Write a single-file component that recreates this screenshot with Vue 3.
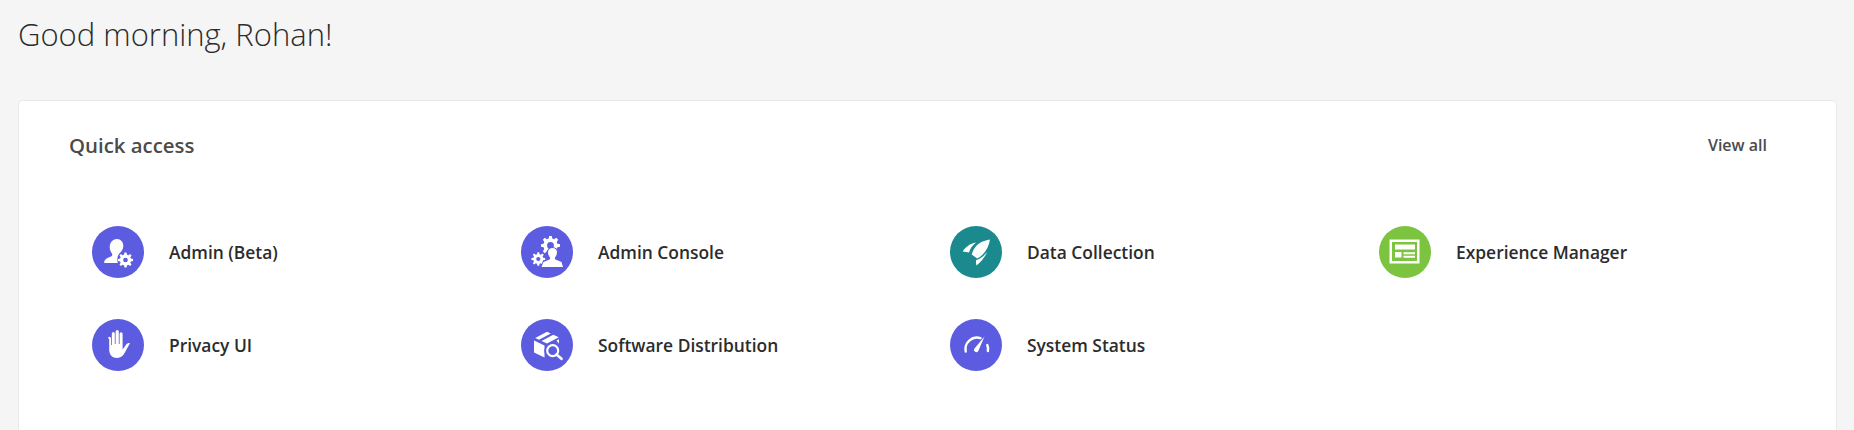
<script setup>
function gear(cx, cy, outer, inner, hole, teeth) {
  const step = (Math.PI * 2) / teeth
  let d = ''
  for (let i = 0; i < teeth; i++) {
    const a = i * step
    const pts = [
      [outer, a - step * 0.17],
      [outer, a + step * 0.17],
      [inner, a + step * 0.33],
      [inner, a + step * 0.67]
    ]
    pts.forEach(([r, t], n) => {
      d += `${n === 0 && i === 0 ? 'M' : 'L'}${(cx + r * Math.cos(t)).toFixed(2)} ${(cy + r * Math.sin(t)).toFixed(2)}`
    })
  }
  d += `Z M${cx - hole} ${cy}a${hole} ${hole} 0 1 0 ${hole * 2} 0a${hole} ${hole} 0 1 0 ${-hole * 2} 0Z`
  return d
}

const adminGear = gear(33.5, 34, 7.6, 5.6, 2.3, 8)
const consoleGearBig = gear(29.5, 19.5, 9.6, 7.2, 3.4, 8)
const consoleGearSmall = gear(17.3, 33, 6.9, 5, 2.1, 8)

const items = [
  { name: 'Admin (Beta)', color: 'purple', icon: 'admin' },
  { name: 'Admin Console', color: 'purple', icon: 'console' },
  { name: 'Data Collection', color: 'teal', icon: 'rocket' },
  { name: 'Experience Manager', color: 'green', icon: 'layout' },
  { name: 'Privacy UI', color: 'purple', icon: 'hand' },
  { name: 'Software Distribution', color: 'purple', icon: 'box' },
  { name: 'System Status', color: 'purple', icon: 'gauge' }
]
</script>

<template>
  <div class="page">
    <h1 class="greeting">Good morning, Rohan!</h1>
    <section class="card">
      <header class="card__head">
        <h2 class="card__title">Quick access</h2>
        <a class="card__link">View all</a>
      </header>
      <ul class="grid">
        <li v-for="item in items" :key="item.name" class="tile">
          <span class="badge" :class="`badge--${item.color}`">
            <svg viewBox="0 0 52 52" width="52" height="52" fill="#fff">
              <template v-if="item.icon === 'admin'">
                <path d="M25 13c3.800 0 6.300 3 6.300 6.800 0 2.500-1 4.600-2.300 6l-2 2.200c-1.400 1.600-2.200 5-1.200 9H12.800c-.5 0-.8-.4-.7-.9.4-2 1.600-3.400 3.400-4.200l3.400-1.400c1.300-.6 1.700-1.700 1.100-2.900-1.300-1.800-2.300-4-2.300-6.300C17.700 16 21.200 13 25 13z" />
                <path :d="adminGear" fill-rule="evenodd" />
              </template>
              <template v-else-if="item.icon === 'console'">
                <path :d="consoleGearBig" fill-rule="evenodd" />
                <path :d="consoleGearSmall" fill-rule="evenodd" />
                <circle cx="31.500" cy="29" r="7" fill="#5c5ce0" />
                <path d="M20.500 41 H42 l-1.500-5-6-2.500c-.8-.5-.8-1.500-.3-2.300 1-1.200 1.800-3 1.800-4.700 0-2.800-1.900-4.500-4.500-4.500s-4.500 1.700-4.500 4.500c0 1.700.8 3.500 1.800 4.700.5.800.5 1.800-.3 2.300l-6 2.500z" stroke="#5c5ce0" stroke-width="1.600" paint-order="stroke" />
              </template>
              <template v-else-if="item.icon === 'rocket'">
                <path d="M40 13.500C33 14.500 27.500 17.500 24 23c-1.200 2-1.800 3.800-2.300 5.500l5.500 4c1.800-.8 3.500-2 5-3.500C36.500 25 39 19.500 40 13.500z" />
                <path d="M26 16.500C20 17.500 15.500 21 12.700 25.500c2 .3 4.300.4 6.300 1 1-3.800 3.600-7.200 7-10z" />
                <path d="M37 26c-1.500 4.500-6 10-10.500 13.500-.5-2-.7-3.800-.3-5.500 4-1 8-4 10.800-8z" />
              </template>
              <template v-else-if="item.icon === 'layout'">
                <path fill-rule="evenodd" d="M10.500 13.500h30v24h-30zm2.500 2.500v19h25v-19z" />
                <path d="M16 18.500h20v5H16zM16 26h6.500v5.500H16zM24.500 26.300H36v2h-11.500zM24.500 29.700H36v2h-11.500z" />
              </template>
              <template v-else-if="item.icon === 'hand'">
                <path d="M16 19.500c0-1 .7-1.700 1.500-1.700s1.500.7 1.500 1.700V26h.8V14.800c0-1 .7-1.800 1.500-1.800s1.500.8 1.500 1.800V25h.8V12.800c0-1 .7-1.800 1.600-1.800s1.600.8 1.600 1.800V25h.8V15c0-1 .7-1.700 1.500-1.700s1.500.7 1.500 1.700V30.500l3.800-5.200c.8-1 1.900-1.600 3.600-1.300-1.500 2.800-4 7.500-5.400 10-1.500 2.700-3.800 5-7.300 5-5.200 0-8.100-3.500-8.100-8.500V19.500z" />
              </template>
              <template v-else-if="item.icon === 'box'">
                <path d="M13 21.500l10.500 5v12L13 33.500zM14.200 19 26 12.700l3.800 1.800-11.800 6.300zM20.500 22l11.800-6.300 5.500 2.600-11.800 6.300z" />
                <path d="M35.500 21.500l2.500-1.200v4.500z" />
                <circle cx="31.700" cy="31.700" r="8.500" fill="#5c5ce0" />
                <circle cx="31.700" cy="31.700" r="5.500" fill="none" stroke="#fff" stroke-width="2.200" />
                <path d="M35.500 35.500l5 4.300" stroke="#fff" stroke-width="2.600" stroke-linecap="round" />
              </template>
              <template v-else-if="item.icon === 'gauge'">
                <path d="M15.700 32.500A11.500 11.500 0 0 1 30.500 19.200M37.300 26a11.500 11.500 0 0 1 .6 6" fill="none" stroke="#fff" stroke-width="2.400" stroke-linecap="round" />
                <path d="M34.500 17.500 28.300 32a2.300 2.300 0 1 1-4-2.300z" />
              </template>
            </svg>
          </span>
          <span class="tile__name">{{ item.name }}</span>
        </li>
      </ul>
    </section>
  </div>
</template>

<style>
html,
body {
  margin: 0;
  background: #f5f5f5;
}
</style>

<style scoped>
.page {
  height: 430px;
  box-sizing: border-box;
  padding: 0 18px 0 19px;
  overflow: hidden;
  font-family: "Open Sans", "Noto Sans", sans-serif;
  color: #2c2c2c;
}

.greeting {
  margin: 0 0 0 -1px;
  padding-top: 14px;
  height: 87px;
  font-size: 31px;
  line-height: 41px;
  font-weight: 300;
}

.card {
  height: 340px;
  background: #fff;
  border-radius: 4px;
  box-shadow: 0 0 0 1px #eaeaea;
  padding: 30px 69px 0 50px;
}

.card__head {
  display: flex;
  justify-content: space-between;
  align-items: center;
  height: 28px;
}

.card__title {
  margin: 0;
  font-size: 20.400px;
  font-weight: 600;
  color: #4b4b4b;
}

.card__link {
  font-size: 16px;
  font-weight: 600;
  color: #4b4b4b;
}

.grid {
  list-style: none;
  margin: 0;
  padding: 46px 0 0 23px;
  display: grid;
  grid-template-columns: repeat(4, 429px);
  grid-auto-rows: 93px;
}

.tile {
  display: flex;
  align-items: center;
  gap: 25px;
}

.tile__name {
  font-size: 17.400px;
  font-weight: 600;
  color: #2c2c2c;
}

.badge {
  width: 52px;
  height: 52px;
  border-radius: 50%;
  display: block;
  flex: none;
}

.badge svg {
  display: block;
}

.badge--purple {
  background: #5c5ce0;
}

.badge--teal {
  background: #1a8a8e;
}

.badge--green {
  background: #7cc33f;
}
</style>
